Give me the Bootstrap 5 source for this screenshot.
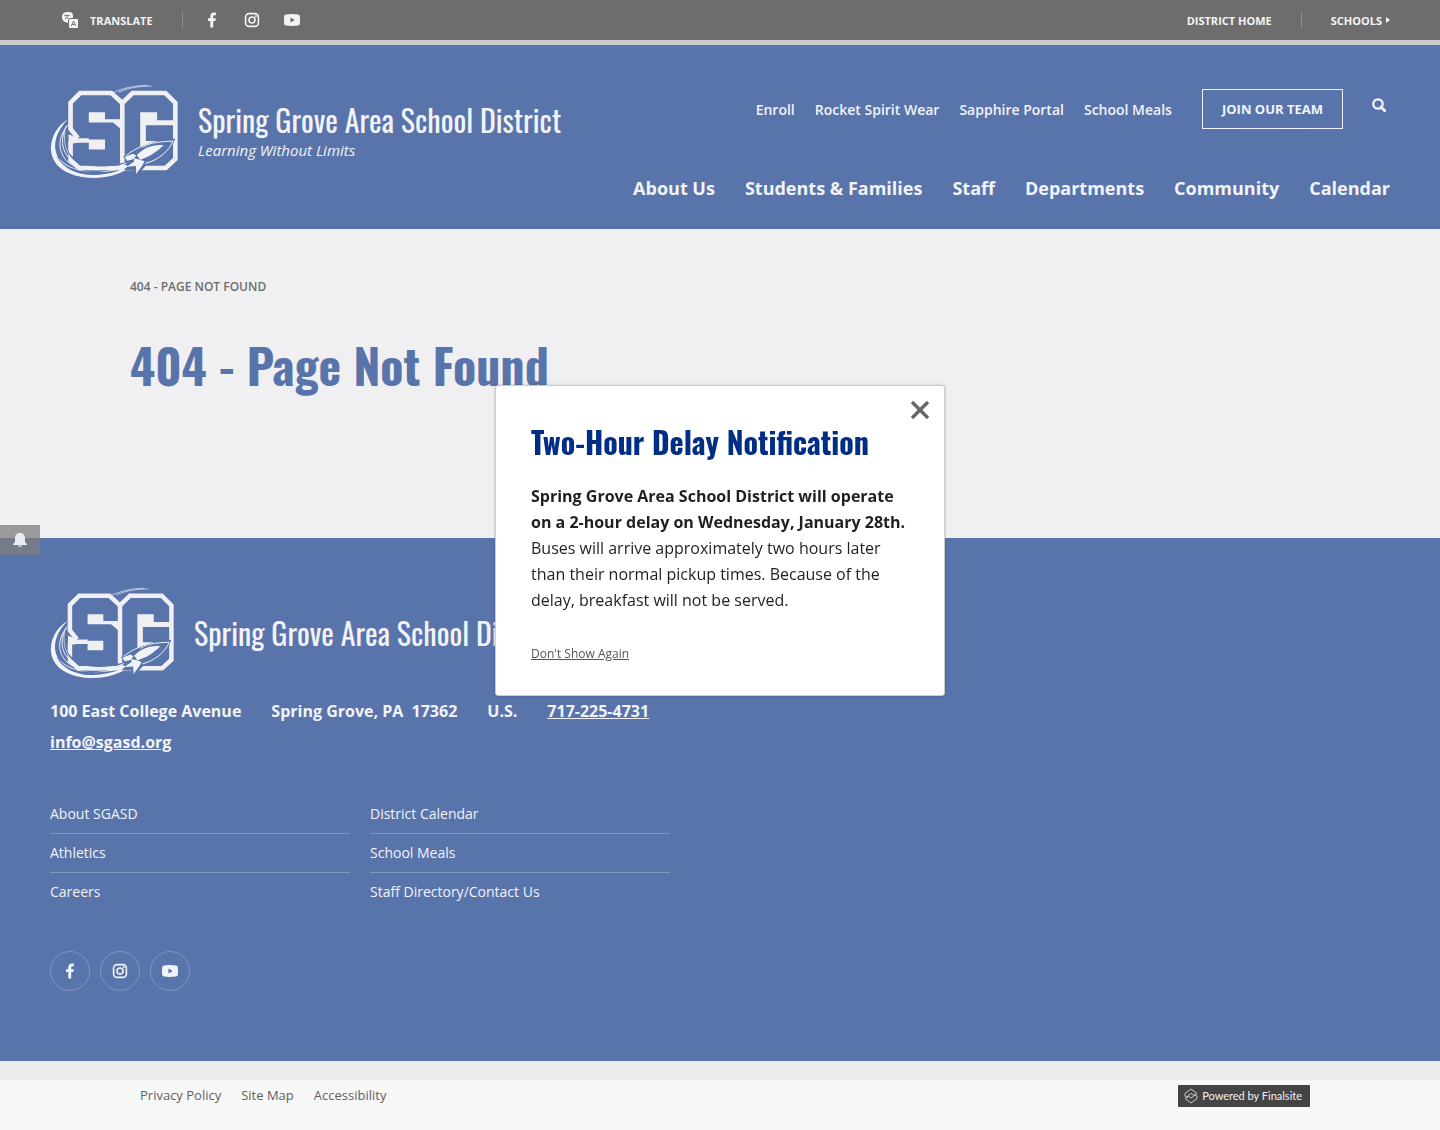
<!DOCTYPE html>
<html lang="en">
<head>
<meta charset="utf-8">
<meta name="viewport" content="width=device-width, initial-scale=1">
<title>404 - Page Not Found</title>
<link href="https://cdn.jsdelivr.net/npm/bootstrap@5.3.0/dist/css/bootstrap.min.css" rel="stylesheet">
<style>
body{font-family:"Open Sans",sans-serif;background:#f8f8f8;color:#1f1f1f}
a{color:inherit;text-decoration:none}
svg{display:block}
.narrow{font-family:Oswald,"Liberation Sans Narrow","Roboto Condensed",sans-serif}
.gutter{padding-left:50px;padding-right:50px}
.topbar{background:#6d6d6d;border-bottom:5px solid #ccc;height:45px;font-size:11px;line-height:16px;color:#f4f4f4}
.topbar .label{padding-top:2px}
.bar-btn{background:none;border:0;color:inherit;padding:0;font:inherit}
.rule{width:1px;height:16px;background:#919191;margin:0 29px}
.rule-social{margin-right:21px}
.site-blue{background:#5974aa;color:#f1f3f9}
.site-head{min-height:184px;padding-top:39px}
.brand-name{font-size:30px;line-height:40px;white-space:nowrap}
.tagline{font-size:15px;line-height:20px;font-style:italic}
.quick{font-size:14px;font-weight:600;gap:20px}
.join{border:1px solid #f1f3f9;height:40px;padding:1px 19px 0;font-size:13px;margin-left:10px;margin-right:9px}
.head-nav{padding-top:5px}
.mainnav{font-size:18px;line-height:28px;gap:30px;margin-top:45px}
.page-main{background:#f0f0f2;padding:50px 130px 0;min-height:309px}
.crumb{font-size:12px;line-height:16px;font-weight:600;color:#6d6d6d}
.page-title{font-size:48px;line-height:68px;font-weight:700;color:#5974aa;margin:36px 0 0}
.site-foot{padding-top:49px;min-height:523px}
.contact{font-size:16px;line-height:31px;column-gap:30px;max-width:640px;margin-top:17px}
.links{font-size:14px;line-height:22px;column-gap:20px;margin-top:37px}
.links ul{width:300px}
.links li{padding:8px 0;border-bottom:1px solid #7f95c2}
.links li:last-child{border-bottom:0}
.rounds{gap:10px}
.round{width:40px;height:40px;border:1px solid #7f95c2;border-radius:50%}
.band{height:19px;background:#ebebeb}
.legal{font-size:13px;line-height:20px;color:#5f5f5f;padding:5px 130px 24px}
.legal ul{gap:20px;padding-left:10px}
.powered{background:#444;color:#f2f2f2;font:11px/22px Lato,sans-serif;border-radius:1px;padding:0 8px 0 6px;gap:4px}
.bell{left:0;width:40px;height:30px;background:rgba(125,125,125,.75);border:0}
.overlay{inset:0 0 50px;pointer-events:none;z-index:10}
.overlay>*{pointer-events:auto}
.notice{width:450px;height:311px;background:#fff;border:1px solid #ccc;border-radius:3px;padding:34px 35px 0;box-shadow:0 0 3px rgba(0,0,0,.2)}
.notice h2{font-size:30px;line-height:44px;font-weight:700;color:#002d85;margin:0 0 19px;white-space:nowrap}
.notice p{font-size:16px;line-height:26px;margin:0 0 31px}
.dismiss{font-size:12px;line-height:20px;color:#555;text-decoration:underline;background:none;border:0;padding:0;display:block}
.shut{top:14px;right:14px;background:none;border:0;padding:0}
</style>
</head>
<body>
<svg width="0" height="0" class="position-absolute" aria-hidden="true">
<symbol id="fb" viewBox="0 0 16 16"><path fill="currentColor" d="M6.300 15.500V9H4V6.200h2.300V4.300C6.300 1.900 7.700.5 9.900.5c.9 0 1.700.1 2 .2v2.500h-1.300c-1.100 0-1.400.6-1.400 1.400v1.600h2.600L11.400 9H9.200v6.500z"/></symbol>
<symbol id="ig" viewBox="0 0 16 16"><g fill="none" stroke="currentColor" stroke-width="1.600"><rect x="1.600" y="1.600" width="12.800" height="12.800" rx="3.500"/><circle cx="8" cy="8" r="3"/></g><circle cx="11.800" cy="4.200" r="1" fill="currentColor"/></symbol>
<symbol id="yt" viewBox="0 0 16 16"><path fill="currentColor" fill-rule="evenodd" d="M2 2.400q6-.7 12 0 1.600.3 1.800 1.800.4 3.800 0 7.600-.2 1.500-1.800 1.800-6 .7-12 0Q.4 13.300.2 11.800q-.4-3.800 0-7.600Q.4 2.700 2 2.400zM6.500 5.500v5L10.800 8z"/></symbol>
<symbol id="logo" viewBox="28 26 386 284">
<path fill="none" stroke="#f0f0f2" stroke-width="14" d="M246 82 213 52H119L90 81V160L112 188M246 82 277 52H376L406 82V251L377 278H116L90 255V200M246 82V277"/>
<path fill="#f0f0f2" d="M145 110H194V131H246V164L218 141H145zM84 176 112 188H145V192H194V222H145V202H112L84 206zM300 110H351V134H406V149H317V197H350V216H300z"/>
<path fill="none" stroke="#5974aa" stroke-width="5" d="M78 222C92 258 140 285 258 263M255 257C280 215 340 197 402 192 390 230 355 260 304 273"/>
<path fill="#f1f3f9" fill-rule="evenodd" d="M84 130C46 151 28 192 31 226 37 283 99 308 160 308 208 308 240 294 269 279L256 268C208 295 104 303 61 257 29 220 44 167 84 130zM48 240C66 283 119 299 160 299 209 298 238 286 258 275 196 301 88 297 48 240z"/>
<g fill="none" stroke="#f1f3f9" stroke-width="3"><path d="M84 147C46 186 51 241 91 266 139 293 214 286 258 263M78 151C58 190 60 237 104 262"/><path stroke-width="2" d="M73 165C66 213 85 248 110 268M235 50C263 36 297 31 335 31M220 50C257 34 292 29 322 29"/></g>
<path fill="#5974aa" d="M248 244 270 230 296 228C325 205 356 193 403 192 388 227 355 253 318 266L313 276 286 306 282 284 250 284 272 264z"/>
<path fill="none" stroke="#f1f3f9" stroke-width="3" d="M258 240C294 211 337 198 399 197 386 228 355 254 316 264"/>
<path fill="#f1f3f9" d="M290 239C312 216 339 206 371 209 350 231 326 245 300 253zM282 249 299 253 313 258 307 270 288 296 287 272 259 274 281 259zM253 245 278 235 288 240 279 252 261 256z"/>
</symbol>
</svg>

<div class="topbar gutter d-flex align-items-center justify-content-between fw-bold">
  <div class="d-flex align-items-center">
    <button type="button" class="bar-btn d-flex align-items-center ms-2 ps-1"><svg width="16" height="16" viewBox="0 0 16 16" class="me-2" aria-hidden="true"><path fill="#f4f4f4" d="M4.500 0H7a4 4 0 0 1 4 4v2H8a2 2 0 0 0-2 2v3l-3-1-2-1.500A5 5 0 0 1 0 5 4.500 4.500 0 0 1 4.500 0z"/><path d="M2 3.500h6M5 2v1.500M3 7c2-1 3-2 3.500-3.500M3.500 4.500 6 6.500" stroke="#888" fill="none"/><rect x="7" y="7" width="9" height="9" rx="1" fill="#f4f4f4"/><path d="m9.300 14 2.200-5 2.200 5M10 12.500h3" stroke="#777" fill="none"/></svg><span class="label ms-1">TRANSLATE</span></button>
    <span class="rule rule-social"></span>
    <div class="d-flex gap-4">
      <a href="#" aria-label="Facebook"><svg width="16" height="16"><use href="#fb"/></svg></a>
      <a href="#" aria-label="Instagram"><svg width="16" height="16"><use href="#ig"/></svg></a>
      <a href="#" aria-label="YouTube"><svg width="16" height="16"><use href="#yt"/></svg></a>
    </div>
  </div>
  <div class="d-flex align-items-center">
    <a href="#" class="label">DISTRICT HOME</a><span class="rule"></span>
    <button type="button" class="bar-btn d-flex align-items-center"><span class="label">SCHOOLS</span><svg width="4" height="6" class="ms-1 ps-0" viewBox="0 0 4 6" aria-hidden="true"><path fill="#f4f4f4" d="M0 0 4 3 0 6z"/></svg></button>
  </div>
</div>

<header class="site-blue site-head gutter d-flex justify-content-between align-items-start">
  <a href="#" class="d-flex" aria-label="Spring Grove Area School District home">
    <svg width="128" height="95" aria-hidden="true"><use href="#logo"/></svg>
    <span class="d-block ps-1 ms-3 pt-3"><span class="narrow brand-name d-block">Spring Grove Area School District</span><span class="tagline d-block">Learning Without Limits</span></span>
  </a>
  <div class="head-nav d-flex flex-column align-items-end">
    <nav class="quick d-flex align-items-center" aria-label="Quick links">
      <a href="#">Enroll</a><a href="#">Rocket Spirit Wear</a><a href="#">Sapphire Portal</a><a href="#">School Meals</a>
      <a href="#" class="join fw-bold d-flex align-items-center">JOIN OUR TEAM</a>
      <button type="button" class="bar-btn pe-1 pb-2" aria-label="Search"><svg width="14" height="14" viewBox="0 0 14 14"><circle cx="6" cy="6" r="4.700" fill="none" stroke="#f1f3f9" stroke-width="2.300"/><path d="m9 9 4 4" stroke="#f1f3f9" stroke-width="2.800" stroke-linecap="round"/></svg></button>
    </nav>
    <nav class="mainnav d-flex fw-bold" aria-label="Main">
      <a href="#">About Us</a><a href="#">Students &amp; Families</a><a href="#">Staff</a><a href="#">Departments</a><a href="#">Community</a><a href="#">Calendar</a>
    </nav>
  </div>
</header>

<main class="page-main">
  <div class="crumb">404 - PAGE NOT FOUND</div>
  <h1 class="page-title narrow">404 - Page Not Found</h1>
</main>

<footer>
  <div class="site-blue site-foot gutter">
    <a href="#" class="d-flex align-items-center" aria-label="Spring Grove Area School District"><svg width="124" height="92" aria-hidden="true"><use href="#logo"/></svg><span class="narrow brand-name ps-1 ms-3">Spring Grove Area School District</span></a>
    <address class="contact d-flex flex-wrap fw-bold mb-0"><span>100 East College Avenue</span><span>Spring Grove, PA&nbsp; 17362</span><span>U.S.</span><a href="#" class="text-decoration-underline">717-225-4731</a><a href="#" class="text-decoration-underline">info@sgasd.org</a></address>
    <nav class="links d-flex" aria-label="Footer">
      <ul class="list-unstyled mb-0"><li><a href="#">About SGASD</a></li><li><a href="#">Athletics</a></li><li><a href="#">Careers</a></li></ul>
      <ul class="list-unstyled mb-0"><li><a href="#">District Calendar</a></li><li><a href="#">School Meals</a></li><li><a href="#">Staff Directory/Contact Us</a></li></ul>
    </nav>
    <div class="rounds d-flex mt-3 pt-4">
      <a href="#" class="round d-flex align-items-center justify-content-center" aria-label="Facebook"><svg width="16" height="16"><use href="#fb"/></svg></a>
      <a href="#" class="round d-flex align-items-center justify-content-center" aria-label="Instagram"><svg width="16" height="16"><use href="#ig"/></svg></a>
      <a href="#" class="round d-flex align-items-center justify-content-center" aria-label="YouTube"><svg width="16" height="16"><use href="#yt"/></svg></a>
    </div>
  </div>
  <div class="band"></div>
  <div class="legal d-flex justify-content-between align-items-start">
    <ul class="list-unstyled d-flex mb-0"><li><a href="#">Privacy Policy</a></li><li><a href="#">Site Map</a></li><li><a href="#">Accessibility</a></li></ul>
    <a href="#" class="powered d-flex align-items-center"><svg width="14" height="16" viewBox="0 0 14 16" fill="none" stroke="#ccc" aria-hidden="true"><path d="M4 10 1 8V5.500L7 1l6 4.500L7 10 4 7.800 7 5.500l3 2M10 6l3 2v2.500L7 15l-6-4.500L4 8"/></svg>Powered by Finalsite</a>
  </div>
</footer>

<div class="overlay position-fixed d-flex align-items-center justify-content-center">
  <button type="button" class="bell position-absolute d-flex align-items-center justify-content-center p-0" aria-label="Show notifications"><svg width="14" height="14" viewBox="0 0 14 14"><path fill="#e8ebf3" d="M7 0c3 0 5 2 5 5v4l2 2v1H0v-1l2-2V5c0-3 2-5 5-5zM5 12.500h4Q8.500 14 7 14T5 12.500z"/></svg></button>
  <section class="notice position-relative" role="dialog" aria-labelledby="notice-title">
    <button type="button" class="shut position-absolute" aria-label="Close"><svg width="20" height="20" viewBox="0 0 20 20"><path d="m2 2 16 16M18 2 2 18" stroke="#666" stroke-width="3.200"/></svg></button>
    <h2 id="notice-title" class="narrow">Two-Hour Delay Notification</h2>
    <p><strong>Spring Grove Area School District will operate on a 2-hour delay on Wednesday, January 28th.</strong> Buses will arrive approximately two hours later than their normal pickup times. Because of the delay, breakfast will not be served.</p>
    <button type="button" class="dismiss">Don't Show Again</button>
  </section>
</div>
<script src="https://cdn.jsdelivr.net/npm/bootstrap@5.3.0/dist/js/bootstrap.bundle.min.js"></script>
</body>
</html>
